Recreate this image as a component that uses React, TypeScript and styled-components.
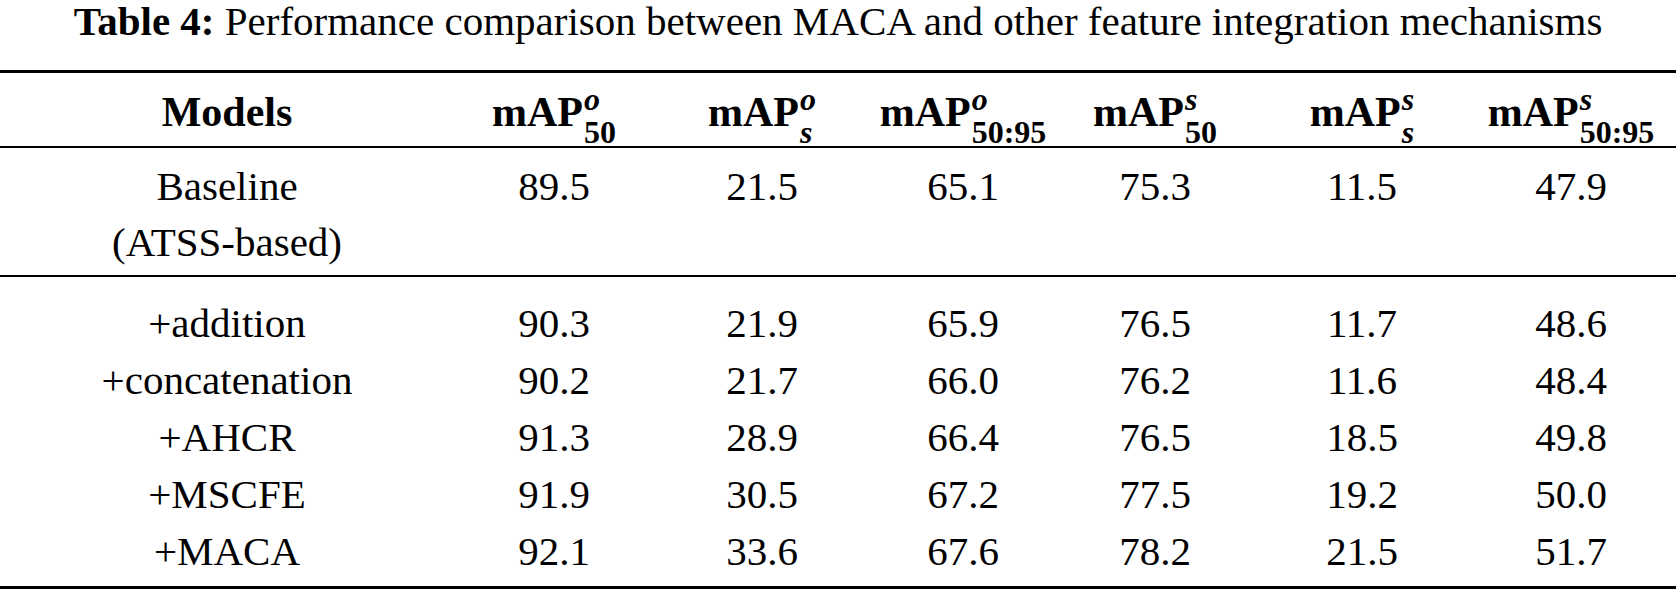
import { createGlobalStyle, styled } from "styled-components";

const SERIF = `"Liberation Serif", "DejaVu Serif", serif`;

const GlobalStyle = createGlobalStyle`
  html, body {
    margin: 0;
    padding: 0;
    background: #fff;
  }
  body {
    font-family: ${SERIF};
    color: #000;
  }
`;

const COLS = "454px 200px 216px 186px 198px 216px 202px";

const Page = styled.div`
  width: 1676px;
  font-family: ${SERIF};
`;

const Caption = styled.div`
  font-size: 41px;
  line-height: 42px;
  height: 42px;
  text-align: center;
  white-space: nowrap;
  margin-bottom: 28px;
`;

const Label = styled.span`
  font-weight: 700;
`;

const Table = styled.div`
  border-top: 3px solid #000;
  border-bottom: 3px solid #000;
`;

const HeadRow = styled.div`
  display: grid;
  grid-template-columns: ${COLS};
  align-items: baseline;
  box-sizing: border-box;
  height: 75px;
  padding-top: 10px;
  border-bottom: 2px solid #000;
  font-size: 42px;
  line-height: 46px;
  font-weight: 700;
`;

const Row = styled.div<{ $lh: number }>`
  display: grid;
  grid-template-columns: ${COLS};
  font-size: 41px;
  line-height: ${(p) => p.$lh}px;
`;

const Group = styled.div<{ $top: number; $bottom: number; $rule?: boolean }>`
  padding: ${(p) => p.$top}px 0 ${(p) => p.$bottom}px;
  border-bottom: ${(p) => (p.$rule ? "2px solid #000" : "none")};
`;

const Cell = styled.div`
  text-align: center;
  white-space: nowrap;
`;

const Scripts = styled.span`
  display: inline-flex;
  flex-direction: column;
  vertical-align: 16px;
  font-size: 32px;
  line-height: 33px;
  text-align: left;
`;

const Script = styled.span<{ $italic?: boolean }>`
  font-style: ${(p) => (p.$italic ? "italic" : "normal")};
  padding-left: 1px;
`;

function Metric({ sup, sub, subItalic }: { sup: string; sub: string; subItalic?: boolean }) {
  return (
    <Cell>
      mAP
      <Scripts>
        <Script $italic>{sup}</Script>
        <Script $italic={subItalic}>{sub}</Script>
      </Scripts>
    </Cell>
  );
}

const rows: [string, string[]][] = [
  ["+addition", ["90.3", "21.9", "65.9", "76.5", "11.7", "48.6"]],
  ["+concatenation", ["90.2", "21.7", "66.0", "76.2", "11.6", "48.4"]],
  ["+AHCR", ["91.3", "28.9", "66.4", "76.5", "18.5", "49.8"]],
  ["+MSCFE", ["91.9", "30.5", "67.2", "77.5", "19.2", "50.0"]],
  ["+MACA", ["92.1", "33.6", "67.6", "78.2", "21.5", "51.7"]],
];

export default function App() {
  return (
    <Page>
      <GlobalStyle />
      <Caption>
        <Label>Table 4:</Label> Performance comparison between MACA and other feature integration mechanisms
      </Caption>
      <Table>
        <HeadRow>
          <Cell>Models</Cell>
          <Metric sup="o" sub="50" />
          <Metric sup="o" sub="s" subItalic />
          <Metric sup="o" sub="50:95" />
          <Metric sup="s" sub="50" />
          <Metric sup="s" sub="s" subItalic />
          <Metric sup="s" sub="50:95" />
        </HeadRow>
        <Group $top={10} $bottom={5} $rule>
          <Row $lh={56}>
            <Cell>
              Baseline
              <br />
              (ATSS-based)
            </Cell>
            <Cell>89.5</Cell>
            <Cell>21.5</Cell>
            <Cell>65.1</Cell>
            <Cell>75.3</Cell>
            <Cell>11.5</Cell>
            <Cell>47.9</Cell>
          </Row>
        </Group>
        <Group $top={18} $bottom={6}>
          {rows.map(([name, vals]) => (
            <Row key={name} $lh={57}>
              <Cell>{name}</Cell>
              {vals.map((v, i) => (
                <Cell key={i}>{v}</Cell>
              ))}
            </Row>
          ))}
        </Group>
      </Table>
    </Page>
  );
}
